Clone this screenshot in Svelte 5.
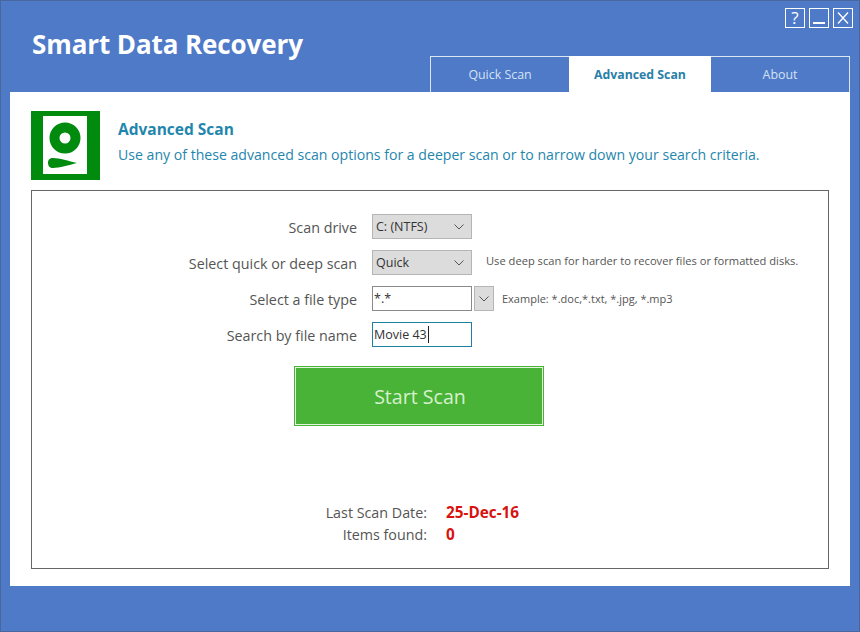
<script>
    let tabs = ["Quick Scan", "Advanced Scan", "About"];
    let active = $state(1);
</script>

<div class="window">

    <!-- HEADER -->
    <div class="header">
        <div class="app-title">Smart Data Recovery</div>

        <div class="header-right">
            <div class="win-buttons">
                <div class="win-btn">?</div>
                <div class="win-btn">
                    <svg width="14" height="14" viewBox="0 0 14 14"><rect x="1" y="11" width="12" height="2" fill="#fff"/></svg>
                </div>
                <div class="win-btn">
                    <svg width="14" height="14" viewBox="0 0 14 14"><path d="M2 1.5 L12 12.5 M12 1.5 L2 12.5" stroke="#fff" stroke-width="1.3" fill="none"/></svg>
                </div>
            </div>

            <div class="tabs">
                {#each tabs as tab, i}
                    <button class="tab tab{i} {active === i ? 'active' : ''}" onclick={() => (active = i)}>{tab}</button>
                {/each}
            </div>
        </div>
    </div>

    <!-- MAIN PANEL -->
    <div class="panel">
        <div class="intro">
            <svg class="disk" width="69" height="69" viewBox="0 0 69 69">
                <rect width="69" height="69" fill="#008a0e"/>
                <rect x="12" y="5" width="44" height="58" fill="#fff"/>
                <circle cx="34" cy="27" r="10.5" fill="none" stroke="#008a0e" stroke-width="10"/>
                <path d="M22 47 C18 47 17 49.5 17 52 C17 55 19 57 22 57 C28 57 38 54 46 52 C38 50 28 47 22 47 Z" fill="#008a0e"/>
            </svg>
            <div class="intro-text">
                <div class="intro-title">Advanced Scan</div>
                <div class="intro-desc">Use any of these advanced scan options for a deeper scan or to narrow down your search criteria.</div>
            </div>
        </div>

        <div class="box">
            <div class="form">
                <div class="label">Scan drive</div>
                <div class="select">
                    <span>C: (NTFS)</span>
                    <svg width="10" height="6" viewBox="0 0 10 6"><path d="M0.5 0.5 L5 5 L9.5 0.5" stroke="#555" fill="none"/></svg>
                </div>
                <div></div>

                <div class="label">Select quick or deep scan</div>
                <div class="select">
                    <span>Quick</span>
                    <svg width="10" height="6" viewBox="0 0 10 6"><path d="M0.5 0.5 L5 5 L9.5 0.5" stroke="#555" fill="none"/></svg>
                </div>
                <div class="hint hint-deep">Use deep scan for harder to recover files or formatted disks.</div>

                <div class="label">Select a file type</div>
                <div class="field">*.*</div>
                <div class="type-extra">
                    <div class="drop">
                        <svg width="10" height="6" viewBox="0 0 10 6"><path d="M0.5 0.5 L5 5 L9.5 0.5" stroke="#555" fill="none"/></svg>
                    </div>
                    <div class="hint">Example: *.doc,*.txt, *.jpg, *.mp3</div>
                </div>

                <div class="label">Search by file name</div>
                <div class="field focused">Movie 43<span class="caret"></span></div>
                <div></div>
            </div>

            <div class="scan-row">
                <button class="scan">Start Scan</button>
            </div>

            <div class="stats">
                <div class="stat-label">Last Scan Date:</div>
                <div class="stat-value">25-Dec-16</div>
                <div class="stat-label">Items found:</div>
                <div class="stat-value">0</div>
            </div>
        </div>
    </div>
</div>

<style>
:global(body) {
    margin: 0;
}

.window {
    width: 860px;
    height: 632px;
    box-sizing: border-box;
    background: #4e7ac8;
    border: 1px solid #46689f;
    padding: 0 9px 45px;
    display: flex;
    flex-direction: column;
    font-family: "Open Sans", "Noto Sans", sans-serif;
    color: #444;
}

.header {
    height: 91px;
    flex: none;
    display: flex;
    justify-content: space-between;
}

.app-title {
    margin: 22px 0 0 22px;
    font-size: 26px;
    line-height: 42px;
    font-weight: 700;
    color: #fff;
    letter-spacing: -0.1px;
}

.header-right {
    display: flex;
    flex-direction: column;
    align-items: flex-end;
    justify-content: space-between;
}

.win-buttons {
    display: flex;
    gap: 4px;
    margin: 7px -3px 0 0;
}

.win-btn {
    width: 18px;
    height: 18px;
    border: 1px solid #fff;
    color: #fff;
    font-size: 17px;
    line-height: 18px;
    text-align: center;
    display: flex;
    align-items: center;
    justify-content: center;
}

.tabs {
    display: flex;
    height: 36px;
    width: 420px;
    box-sizing: border-box;
    border: 1px solid #dbe6f5;
    border-bottom: none;
}

.tab {
    border: none;
    padding: 0;
    background: transparent;
    color: #d4e2f5;
    font-family: inherit;
    font-size: 12.4px;
    cursor: pointer;
}

.tab0 { width: 138px; }
.tab1 { width: 142px; }
.tab2 { flex: 1; }

.active {
    background: #fff;
    color: #2a7fa8;
    font-weight: 700;
    margin-top: -1px;
    font-size: 12.3px;
}

.panel {
    flex: 1;
    background: #fff;
    padding: 19px 21px 17px;
    display: flex;
    flex-direction: column;
    gap: 10px;
}

.intro {
    display: flex;
    gap: 18px;
}

.disk {
    flex: none;
}

.intro-title {
    margin-top: 8px;
    font-size: 15.5px;
    line-height: 20px;
    font-weight: 700;
    color: #1f86ad;
}

.intro-desc {
    margin-top: 6px;
    font-size: 14.1px;
    line-height: 20px;
    color: #1f86ad;
    white-space: nowrap;
}

.box {
    flex: 1;
    border: 1px solid #666;
    padding-top: 23px;
}

.form {
    display: grid;
    grid-template-columns: 325px 100px 1fr;
    column-gap: 15px;
    row-gap: 11px;
    grid-auto-rows: 25px;
    align-items: center;
}

.label {
    text-align: right;
    font-size: 14.3px;
    line-height: 23px;
    padding-top: 2px;
    color: #555;
    white-space: nowrap;
}

.select {
    height: 25px;
    box-sizing: border-box;
    background: #dcdcdc;
    border: 1px solid #b5b5b5;
    padding: 0 4px 0 3px;
    display: flex;
    align-items: center;
    justify-content: space-between;
    font-size: 12.5px;
    color: #333;
}

.select svg {
    margin-right: 3px;
}

.field {
    height: 25px;
    box-sizing: border-box;
    background: #fff;
    border: 1px solid #8a8a8a;
    padding: 0 1px;
    display: flex;
    align-items: center;
    font-size: 12.5px;
    color: #333;
}

.focused {
    border-color: #1f7f9f;
}

.caret {
    width: 1px;
    height: 17px;
    background: #222;
    margin-left: 1px;
}

.type-extra {
    display: flex;
    align-items: center;
    margin-left: -13px;
    gap: 8px;
}

.drop {
    width: 20px;
    height: 25px;
    box-sizing: border-box;
    background: #dcdcdc;
    border: 1px solid #b5b5b5;
    display: flex;
    align-items: center;
    justify-content: center;
}

.hint {
    font-size: 11px;
    color: #555;
    white-space: nowrap;
}

.hint-deep {
    margin: -4px 0 0 -1px;
    font-size: 11.15px;
}

.scan-row {
    margin: 19px 0 0 262px;
}

.scan {
    width: 250px;
    height: 60px;
    box-sizing: border-box;
    background: #48b336;
    border: 1px solid #48b336;
    outline: 1px solid #e6f5e0;
    outline-offset: -2px;
    color: #d6f0cc;
    font-family: inherit;
    font-size: 19.6px;
    padding: 0 0 0 2px;
    cursor: pointer;
}

.stats {
    margin-top: 76px;
    display: grid;
    grid-template-columns: 395px 1fr;
    column-gap: 19px;
    row-gap: 2px;
    grid-auto-rows: 20px;
    align-items: center;
}

.stat-label {
    text-align: right;
    font-size: 14.3px;
    color: #555;
}

.stat-value {
    font-size: 15.3px;
    font-weight: 700;
    color: #d8120f;
}
</style>
